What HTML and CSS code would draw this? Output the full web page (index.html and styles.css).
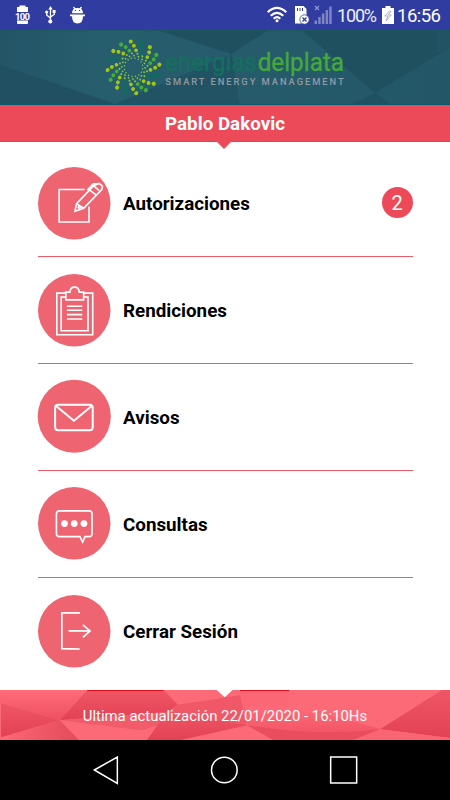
FILE: index.html
```html
<!DOCTYPE html>
<html lang="es">
<head>
<meta charset="utf-8">
<title>Energías del Plata</title>
<link rel="stylesheet" href="styles.css">
</head>
<body>
<div class="screen">
  <div class="status">
    <svg class="status-art" viewBox="0 0 450 30">
      <g fill="#fff">
        <path d="M19.500 5.500h6V7H28v5H17V7h2.500zM17 20.500h11V23q0 1-1 1h-9q-1 0-1-1z"/>
        <text x="15" y="20" class="tiny" textLength="15">100</text>
        <path d="M50.500 6l2.200 3.500h-4.400z"/><circle cx="50.300" cy="21.500" r="2"/><circle cx="46.700" cy="12" r="1.600"/><path d="M52.600 10h3v3h-3z"/>
        <path d="M72 13.200q0-5.300 5.500-5.300t5.500 5.300zM70 14.500h15v1.700h-2q0 7.300-5.500 7.300T72 16.200h-2z"/>
      </g>
      <path d="M50.500 8v13M46.700 12v3l3.800 3.300M54.200 12v2.500L50.500 17M73.500 7l1.500 2M81.500 7L80 9" fill="none" stroke="#fff" stroke-width="1.300"/>
      <path d="M74.800 10.500h1.200M79 10.500h1.200" stroke="#303c9f" stroke-width="1.200"/>
      <g fill="none" stroke="#fff" stroke-width="2.100">
        <path d="M267.700 12.200q9.300-8.500 18.600 0M270.700 15.700q6.300-5.800 12.600 0M273.700 18.700q3.300-3 6.600 0"/>
      </g>
      <circle cx="277" cy="20.800" r="1.500" fill="#fff"/>
      <path d="M295 6h8.500l3 3v14.500H295z" fill="#fff"/>
      <path d="M297.500 8v3M300 8v3M302.500 8v3" stroke="#303c9f"/>
      <circle cx="304.500" cy="19.500" r="4.700" fill="#fff" stroke="#303c9f" stroke-width=".8"/>
      <path d="M302.500 17.500l4 4m0-4l-4 4" stroke="#303c9f" stroke-width="1.300"/>
      <path d="M314.500 20.500h2.500V24h-2.500zM318.200 17h2.500v7h-2.500zM321.900 13.500h2.500V24h-2.500zM325.600 10h2.500v14h-2.500zM329.200 6.500h2.500V24h-2.500z" fill="#7d85c3"/>
      <path d="M315 6l4 4m0-4l-4 4" stroke="#8d94cb" stroke-width="1.200"/>
      <path d="M385.500 6h5v2h3.500v16h-12V8h3.500z" fill="#fff"/>
      <path d="M389.500 11l-4.800 5h3.300l-2 5 5.300-6H388l3-3.500z" fill="none" stroke="#a5a8b5" stroke-width=".9"/>
      <text class="status-text" x="337" y="22" textLength="40">100%</text>
      <text class="status-text time" x="397" y="22" textLength="44">16:56</text>
    </svg>
  </div>

  <header class="brand">
    <svg class="brand-art" viewBox="0 0 1350 225">
      <defs>
        <linearGradient id="teal"><stop offset="0" stop-color="#235567"/><stop offset=".22" stop-color="#275e6e"/><stop offset="1" stop-color="#235768"/></linearGradient>
        <g id="arm"><circle cx="0" cy="-78" r="6.200"/><circle cx="8" cy="-64.500" r="5.900"/><circle cx="13" cy="-50" r="5.600"/></g>
        <g id="tail" fill="#8cc63a"><circle cx="16" cy="-39" r="3"/><circle cx="18" cy="-30" r="2.700"/><circle cx="17" cy="-22" r="2.200"/></g>
      </defs>
      <path fill="url(#teal)" d="M0 0h1350v225H0z"/>
      <path fill="#205062" d="M0 104L345 222 340 225H0z"/>
      <path fill="#1f5060" d="M470 0h335L695 72z"/>
      <path fill="#215365" d="M695 72L345 222v3h375z"/>
      <path fill="#1f5060" d="M905 0h445v52L1125 189z"/>
      <path fill="#205162" d="M1125 189l-75 36h125z"/>
      <path fill="#225365" d="M1310 0h40v52l-40 18z"/>
      <path fill="#1e5b5f" d="M0 0h1350v2H0z"/>
      <path fill="#065a70" d="M0 222h1350v3H0z"/>
      <g id="spiral" transform="translate(400.500 112)"></g>
      <text class="logo dark" x="495" y="123" textLength="276" lengthAdjust="spacingAndGlyphs">energias</text>
      <text class="logo light" x="773" y="123" textLength="259" lengthAdjust="spacingAndGlyphs">delplata</text>
      <text class="tagline" x="496" y="165" textLength="535">SMART ENERGY MANAGEMENT</text>
    </svg>
  </header>

  <div class="user">Pablo Dakovic</div>

  <main class="menu">
    <div class="row">
      <svg class="icon" viewBox="24 22 216 216"><circle class="disc" cx="132" cy="130" r="108"/>
        <path d="M163 89H87v97h89v-46"/><path d="M134 154l5-23 51-53 16-7 10 8-2 10-54 56zM139 131l21 14M177 90l20 15M171 91l18-19 17-1M190 78l16 14"/><circle cx="147" cy="142" r="3"/>
      </svg>
      <span class="label">Autorizaciones</span>
      <span class="count">2</span>
    </div>
    <div class="row">
      <svg class="icon" viewBox="24 26 216 216"><circle class="disc" cx="132" cy="134" r="108"/>
        <path d="M107 83H80v124h107V83h-27M107 95H93v100h80V95h-13M107 80h12q1-15 14-15t14 15h13v23h-53zM110 122h46M110 134h46M110 147h46M110 160h46"/>
      </svg>
      <span class="label">Rendiciones</span>
    </div>
    <div class="row">
      <svg class="icon" viewBox="24 25.500 216 216"><circle class="disc" cx="132" cy="133.500" r="109"/>
        <g class="bold"><rect x="75" y="99" width="112" height="76" rx="9"/><path d="M78 103l53 44 53-44"/></g>
      </svg>
      <span class="label">Avisos</span>
    </div>
    <div class="row">
      <svg class="icon" viewBox="24 22 216 216"><circle class="disc" cx="132" cy="130" r="108"/>
        <path d="M88 93h88q9 0 9 9v59q0 9-9 9h-12l-7 16-8-16H88q-9 0-9-9v-59q0-9 9-9z"/><g class="dots"><circle cx="103" cy="131" r="10"/><circle cx="132" cy="131" r="10"/><circle cx="161" cy="131" r="10"/></g>
      </svg>
      <span class="label">Consultas</span>
    </div>
    <div class="row">
      <svg class="icon" viewBox="24 26 216 216"><circle class="disc" cx="132" cy="134" r="108"/>
        <path class="door" d="M149 79H95v107l53 1M115 133h63M158 115l21 18-21 19"/>
      </svg>
      <span class="label">Cerrar Sesión</span>
    </div>
  </main>

  <footer class="updated">
    <svg class="updated-art" viewBox="0 0 1350 150">
      <defs>
        <linearGradient id="red" x2="0" y2="1"><stop offset="0" stop-color="#ef5665"/><stop offset="1" stop-color="#e24254"/></linearGradient>
        <linearGradient id="redSoft" x2="0" y2="1"><stop offset="0" stop-color="#ff6c7a"/><stop offset="1" stop-color="#ee5060"/></linearGradient>
        <linearGradient id="redSide"><stop offset="0" stop-color="#fa6573"/><stop offset="1" stop-color="#e44a5a"/></linearGradient>
      </defs>
      <path fill="#fd6a77" d="M0 0h1350v150H0z"/>
      <path fill="url(#redSoft)" d="M0 38V0h262l-82 91z"/>
      <path fill="url(#red)" d="M3 40l177 51L3 142z"/>
      <path fill="url(#redSide)" d="M30 136l150-45 57 59H20z"/>
      <path fill="url(#red)" d="M262 0h228l44 44-30 22-324 25z"/>
      <path fill="#f05c6a" d="M180 91l324-25-27 39-80 25z"/>
      <path fill="#fd6a77" d="M180 91l285 35-24 24H237z"/>
      <path fill="#f05867" d="M534 44L720 16l22 90-265-1z"/>
      <path fill="url(#red)" d="M500 66l242 40-200 44H441z"/>
      <path fill="#fb6775" d="M720 0h145l-5 50-120 56z"/>
      <path fill="url(#redSoft)" d="M742 50h160l240 67-82 33H820l-78-44z"/>
      <path fill="#ea4d5d" d="M742 106q220 35 398 12l-80 32H820z"/>
      <path fill="url(#red)" d="M1326 0h24v144l-210-26z"/>
      <path fill="#fa6573" d="M1140 118l-80 32h290v-6z"/>
      <path fill="#dd0d1d" d="M262 0h228v3H262zM720 0h147v3H720z"/>
      <path fill="#fff" d="M650 0h48l-24 22z"/>
    </svg>
    <span class="updated-text">Ultima actualización 22/01/2020 - 16:10Hs</span>
  </footer>

  <nav class="nav">
    <svg viewBox="0 0 1350 180"><path d="M283 90l69-39v79zM992 51h78v78h-78z"/><circle cx="673" cy="90" r="38.500"/></svg>
  </nav>
</div>
<script src="spiral.js"></script>
</body>
</html>
```
FILE: styles.css
```css
* { box-sizing: border-box; }
body {
  margin: 0;
  background: #fff;
  font-family: Roboto, "Liberation Sans", sans-serif;
}
svg { display: block; }
.screen {
  width: 450px;
  height: 800px;
  display: flex;
  flex-direction: column;
  overflow: hidden;
}
.status { height: 30px; background: #303c9f; }
.status-art { width: 450px; height: 30px; }
.status-text { font-size: 18px; fill: #eef0fb; }
.time { font-size: 18.5px; fill: #fff; }
.tiny { font-size: 9.5px; font-weight: 700; }
.brand { height: 75px; }
.brand-art { width: 450px; height: 75px; }
.logo { font-family: Roboto, sans-serif; font-size: 77px; stroke-width: 1; }
.dark { fill: #14705d; stroke: #14705d; }
.light { fill: #43aa38; stroke: #43aa38; }
.tagline { font-size: 28px; fill: #929aa3; font-weight: 500; }
.user {
  position: relative;
  height: 37px;
  background: #ec4a59;
  border-bottom: 1px solid #e54253;
  color: #fff;
  font-size: 18.8px;
  font-weight: 700;
  line-height: 39px;
  text-align: center;
}
.user::after {
  content: "";
  position: absolute;
  top: 36px;
  left: 216px;
  border: 8.5px solid transparent;
  border-top-color: #ec4a59;
  border-bottom: 0;
}
.menu {
  height: 548px;
  padding: 8px 37.5px 0;
}
.row {
  height: 106.9px;
  display: flex;
  align-items: center;
  border-bottom: 1px solid #ec5b68;
}
.row:last-child { border-bottom: 0; }
.icon {
  width: 72.5px;
  height: 72.5px;
  overflow: visible;
  fill: none;
  stroke: #fff;
  stroke-width: 4.8;
}
.disc { fill: #ee6470; stroke: none; }
.bold { stroke-width: 6; }
.dots { fill: #fff; stroke: none; }
.door { stroke-width: 5; }
.label {
  flex: 1;
  margin-left: 13px;
  padding-top: 2px;
  font-size: 18.8px;
  font-weight: 700;
  color: #000;
}
.count {
  width: 31px;
  height: 31px;
  border-radius: 50%;
  background: #ec4a59;
  color: #fff;
  font-size: 20px;
  line-height: 32px;
  text-align: center;
}
.updated {
  display: grid;
  height: 50px;
}
.updated-art, .updated-text { grid-area: 1 / 1; }
.updated-art { width: 450px; height: 50px; }
.updated-text {
  z-index: 1;
  font-size: 14.9px;
  line-height: 52px;
  text-align: center;
  color: #fff;
}
.nav { height: 60px; background: #000; }
.nav svg {
  width: 450px;
  height: 60px;
  fill: none;
  stroke: #fff;
  stroke-width: 4.5;
}
```
FILE: spiral.js
```js
const colors = ["#a0c814", "#0b7058", "#a0c814", "#45b035"];
let arms = "";
for (let i = 0; i < 16; i++) {
  arms += `<g transform="rotate(${i * 22.5 - 6})" fill="${colors[i % 4]}"><use href="#arm"/><use href="#tail"/></g>`;
}
document.getElementById("spiral").innerHTML = arms;
```
